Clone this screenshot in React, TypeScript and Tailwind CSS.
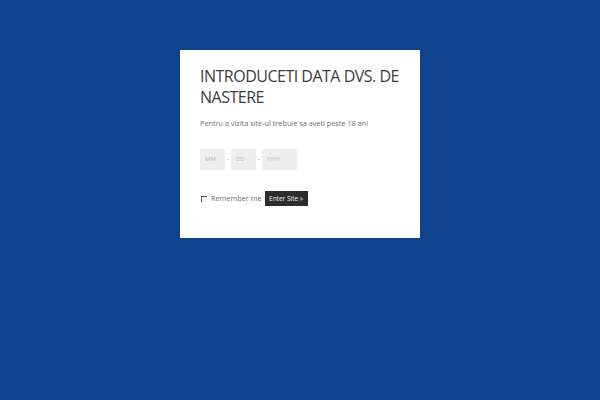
import React from "react";

export default function App() {
  return (
    <div className="w-[600px] h-[400px] bg-[#10438e] flex justify-center pt-[50px]" style={{ fontFamily: '"Open Sans", sans-serif' }}>
      <div className="w-[240px] h-[188px] bg-white px-[20px] pt-[16px]">
        <h1 className="text-[16px] leading-[21px] font-normal text-[#3d3d3d] tracking-[-0.5px] whitespace-nowrap">
          INTRODUCETI DATA DVS. DE
          <br />
          NASTERE
        </h1>
        <p className="mt-[9px] text-[7.3px] leading-[12px] text-[#707070]">Pentru a vizita site-ul trebuie sa aveti peste 18 ani</p>
        <div className="mt-[20px] flex items-center">
          <div className="w-[25px] h-[21px] bg-[#eeeeee] text-[6px] text-[#bbb] flex items-center pl-[5px]">MM</div>
          <span className="w-[6px] text-center text-[7px] text-[#999]">-</span>
          <div className="w-[25px] h-[21px] bg-[#eeeeee] text-[6px] text-[#bbb] flex items-center pl-[5px]">DD</div>
          <span className="w-[6px] text-center text-[7px] text-[#999]">-</span>
          <div className="w-[35px] h-[21px] bg-[#eeeeee] text-[6px] text-[#bbb] flex items-center pl-[5px]">YYYY</div>
        </div>
        <div className="mt-[21px] flex items-center">
          <div className="w-[6px] h-[6px] ml-[1px] border-t-[1.5px] border-l-[1.5px] border-[#555] bg-[#f4f4f4]" />
          <span className="ml-[4px] text-[7.3px] text-[#707070]">Remember me</span>
          <div className="ml-[3px] w-[43px] h-[15px] bg-[#2d2d2d] text-[#eee] text-[6.5px] flex items-center justify-center">Enter Site »</div>
        </div>
      </div>
    </div>
  );
}
